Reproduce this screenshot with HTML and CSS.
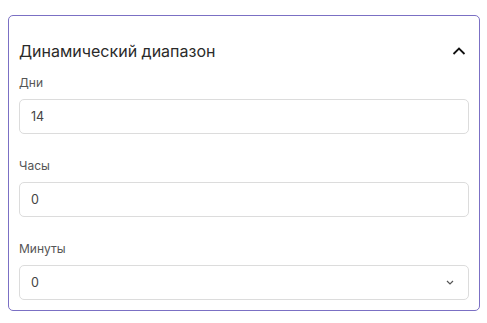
FILE: index.html
```html
<!DOCTYPE html>
<html lang="ru">
<head>
<meta charset="utf-8">
<link rel="stylesheet" href="styles.css">
</head>
<body>
<section class="card">
  <header class="card-header">
    <h2 class="card-title">Динамический диапазон</h2>
    <svg class="chevron-up" width="14" height="8" viewBox="0 0 14 8"><path d="M1.5 7 L7 1.5 L12.5 7" fill="none" stroke="#111" stroke-width="1.8"/></svg>
  </header>
  <div class="field">
    <label class="field-label">Дни</label>
    <div class="input">14</div>
  </div>
  <div class="field">
    <label class="field-label">Часы</label>
    <div class="input">0</div>
  </div>
  <div class="field">
    <label class="field-label">Минуты</label>
    <div class="input select">
      <span>0</span>
      <svg class="chevron-down" width="8" height="5" viewBox="0 0 8 5"><path d="M1 1 L4 4 L7 1" fill="none" stroke="#555" stroke-width="1.2"/></svg>
    </div>
  </div>
</section>
</body>
</html>
```
FILE: styles.css
```css
* { box-sizing: border-box; }
html, body { margin: 0; padding: 0; background: #fff; }
body {
  font-family: Inter, "Noto Sans", sans-serif;
  padding: 15px 8px 0 8px;
}
.card {
  width: 472px;
  height: 296px;
  border: 1px solid #7b70c4;
  border-radius: 5px;
  padding: 23px 10px 9px 10px;
  display: flex;
  flex-direction: column;
  gap: 24px;
}
.card-header {
  display: flex;
  align-items: center;
  justify-content: space-between;
  height: 24px;
  margin-bottom: -12px;
}
.card-title {
  margin: 0;
  font-size: 16px;
  font-weight: 400;
  color: #2a2a2a;
}
.chevron-up { margin-right: 3px; }
.field {
  display: flex;
  flex-direction: column;
  gap: 8px;
}
.field-label {
  font-size: 12px;
  line-height: 16px;
  color: #555;
}
.input {
  height: 35px;
  border: 1px solid #dcdcdc;
  border-radius: 5px;
  padding: 0 11px;
  display: flex;
  align-items: center;
  font-size: 12.5px;
  color: #444;
}
.select { justify-content: space-between; }
.chevron-down { margin-right: 3px; }
```
